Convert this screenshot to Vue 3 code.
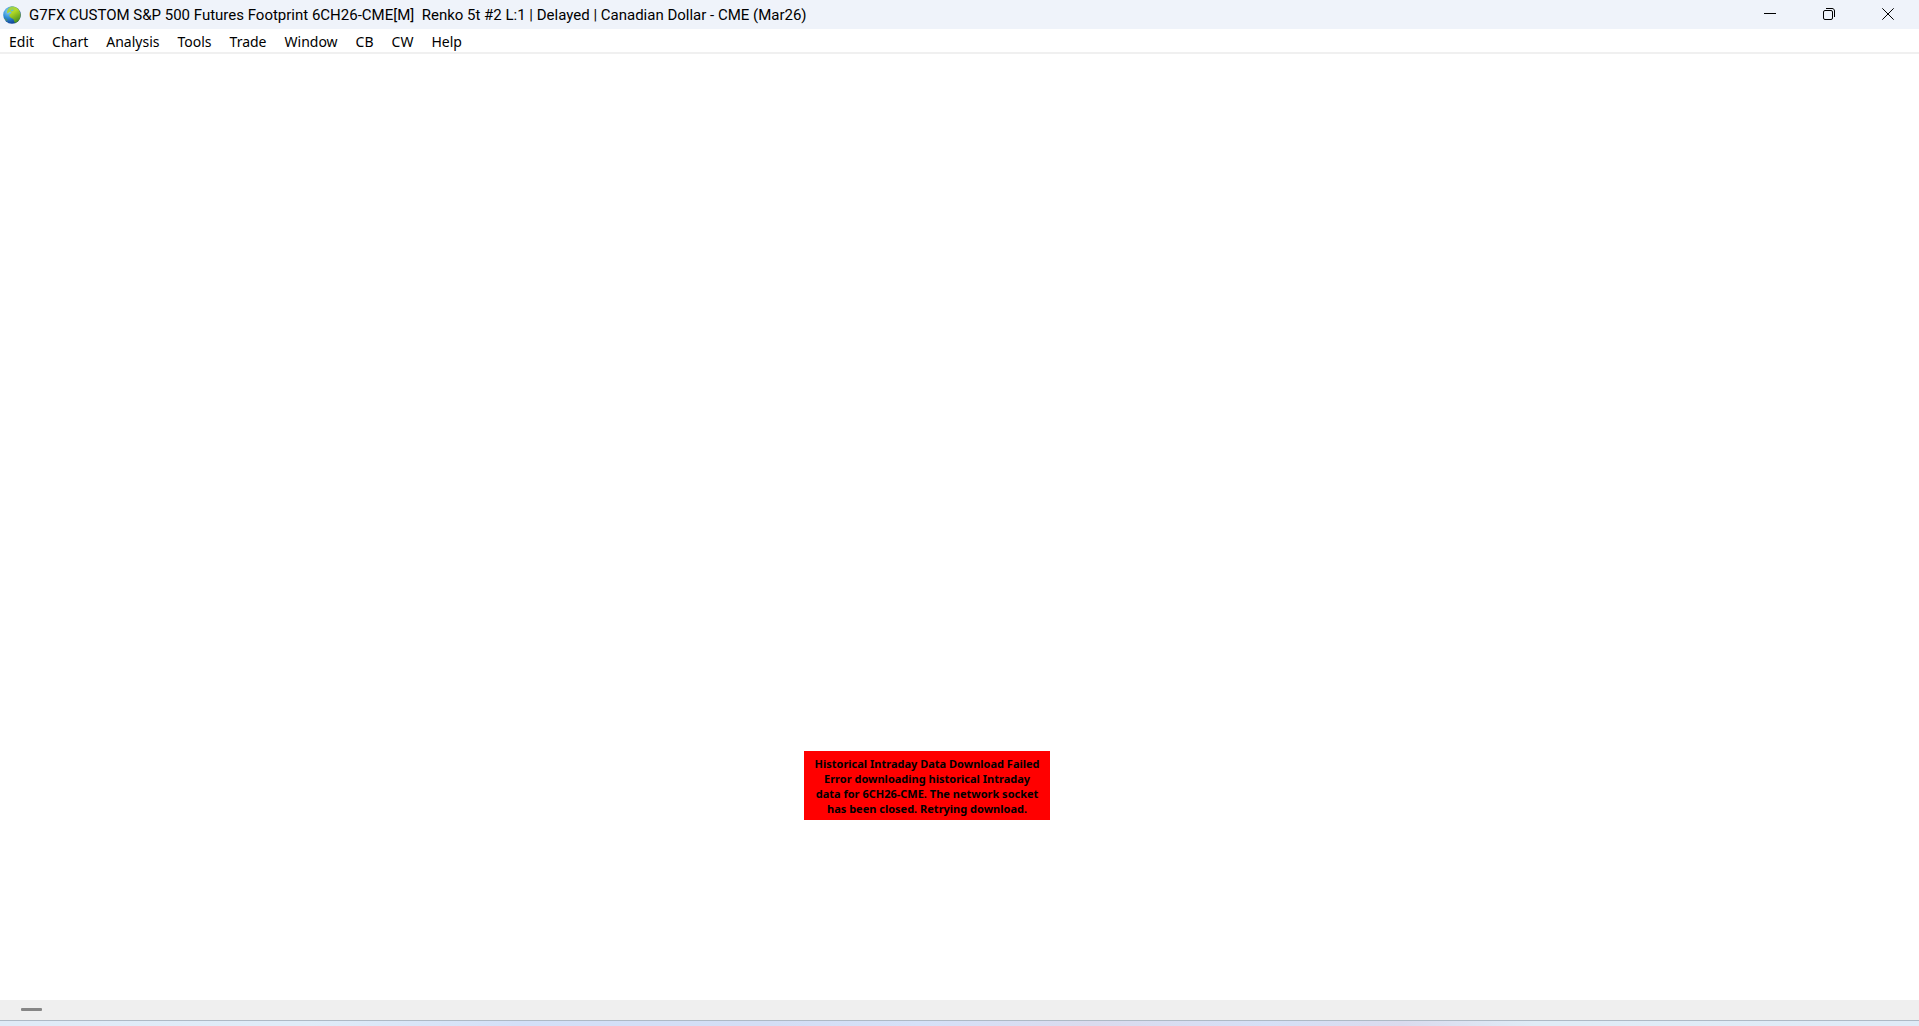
<template>
    <div class="window">
        <header class="titlebar">
            <svg class="app-icon" viewBox="0 0 18 18" aria-hidden="true">
                <defs>
                    <radialGradient id="ocean" cx="0.3" cy="0.3" r="0.7">
                        <stop offset="0" stop-color="#8fd2f5" />
                        <stop offset="0.5" stop-color="#2f8fd6" />
                        <stop offset="1" stop-color="#12469a" />
                    </radialGradient>
                    <linearGradient id="land" x1="0" y1="0" x2="0.5" y2="1">
                        <stop offset="0" stop-color="#8cc86a" />
                        <stop offset="0.45" stop-color="#b4da24" />
                        <stop offset="1" stop-color="#4e9420" />
                    </linearGradient>
                </defs>
                <circle cx="9" cy="9" r="8.8" fill="url(#ocean)" />
                <path
                    fill="url(#land)"
                    d="M7.500 0.800C9.500 0 12 0.500 14 1.900C16.800 4 18 7.300 17.500 10.500C17 13.500 15 16 12.200 17.100C11 16 11.200 14.500 10.200 13C9 11.800 7.400 11.900 6.600 10.400C6 8.700 6.900 7.800 8.200 7.200C8.800 6.500 8.300 5.800 7.200 5.700C5.800 5.600 5.600 6.900 4.800 7.200C4 7.200 3.800 6.200 4.200 5C4.800 3.200 5.800 1.600 7.500 0.800Z"
                />
                <path fill="#5cb7d8" d="M7.500 4.500L10 3.200L10.600 4.400L8.800 5.500Z" />
                <path fill="#5f9f4a" d="M1.500 12C3 12.500 4 13.800 4.500 15.500C3.200 14.800 2 13.500 1.500 12Z" />
            </svg>
            <h1 class="title">{{ title }}</h1>
            <div class="controls">
                <button type="button" aria-label="Minimize">
                    <svg viewBox="0 0 12 12"><path d="M0 5.500H12" /></svg>
                </button>
                <button type="button" aria-label="Restore">
                    <svg viewBox="0 0 12 12">
                        <rect x="0.5" y="2.500" width="9" height="9" rx="1.500" />
                        <path d="M3 0.500H9C10.500 0.500 11.500 1.500 11.500 3V9" />
                    </svg>
                </button>
                <button type="button" aria-label="Close">
                    <svg viewBox="0 0 12 12"><path d="M0.300 0.300L11.700 11.700M11.700 0.300L0.300 11.700" /></svg>
                </button>
            </div>
        </header>

        <nav class="menubar">
            <button v-for="item in menu" :key="item" type="button">{{ item }}</button>
        </nav>

        <main class="chart">
            <div class="alert" role="alert">
                <div v-for="line in message" :key="line">{{ line }}</div>
            </div>
        </main>

        <div class="scrollbar">
            <div class="thumb"></div>
        </div>
        <div class="desktop-edge"></div>
    </div>
</template>

<script setup>
const title = 'G7FX CUSTOM S&P 500 Futures Footprint 6CH26-CME[M]  Renko 5t #2 L:1 | Delayed | Canadian Dollar - CME (Mar26)'

const menu = ['Edit', 'Chart', 'Analysis', 'Tools', 'Trade', 'Window', 'CB', 'CW', 'Help']

const message = [
    'Historical Intraday Data Download Failed',
    'Error downloading historical Intraday',
    'data for 6CH26-CME. The network socket',
    'has been closed. Retrying download.'
]
</script>

<style>
body {
    margin: 0;
    background: #ffffff;
}
</style>

<style scoped>
.window {
    display: flex;
    flex-direction: column;
    height: 100vh;
    color: #000000;
    font-family: "Noto Sans", "Segoe UI", sans-serif;
    font-size: 14px;
}

.titlebar {
    display: flex;
    align-items: center;
    height: 29px;
    padding: 0 2px 0 3px;
    background: #eff3fa;
}

.app-icon {
    width: 18px;
    height: 18px;
    flex: none;
}

.title {
    flex: 1;
    margin: 0 0 0 8px;
    font-family: Roboto, "Segoe UI", sans-serif;
    font-size: 15px;
    font-weight: 400;
    line-height: 28px;
    white-space: pre;
    overflow: hidden;
}

.controls {
    display: flex;
    align-self: stretch;
}

.controls button {
    display: flex;
    align-items: center;
    justify-content: center;
    width: 59px;
    padding: 0 0 1px;
    border: none;
    background: transparent;
}

.controls button:hover {
    background: #dfe4ec;
}

.controls svg {
    width: 12px;
    height: 12px;
    fill: none;
    stroke: #000000;
}

.menubar {
    display: flex;
    height: 23px;
    border-bottom: 2px solid #f0f0f0;
}

.menubar button {
    padding: 2px 9px 0;
    border: none;
    background: transparent;
    color: inherit;
    font: inherit;
    line-height: 21px;
}

.menubar button:hover {
    background: #e5f3ff;
}

.chart {
    position: relative;
    flex: 1;
}

.alert {
    position: absolute;
    left: 41.9%;
    bottom: 180px;
    width: 246px;
    padding: 5px 0 4px;
    background: #ff0000;
    font-size: 11px;
    font-weight: 700;
    line-height: 15px;
    text-align: center;
    white-space: nowrap;
}

.scrollbar {
    box-sizing: border-box;
    display: flex;
    align-items: center;
    height: 20px;
    padding: 0 0 1px 21px;
    background: #efefef;
}

.thumb {
    width: 21px;
    height: 3px;
    border-radius: 1px;
    background: #868686;
}

.desktop-edge {
    height: 5px;
    border-top: 1px solid #adb9c5;
    background: linear-gradient(90deg, #dfebf7 0%, #dfecf8 16%, #d3e0f8 27%, #d3def5 40%, #d5e1f8 48%, #dadbee 57%, #d5e0f6 66%, #dadbee 73%, #dfecf6 80%, #dfebf7 100%);
}
</style>
